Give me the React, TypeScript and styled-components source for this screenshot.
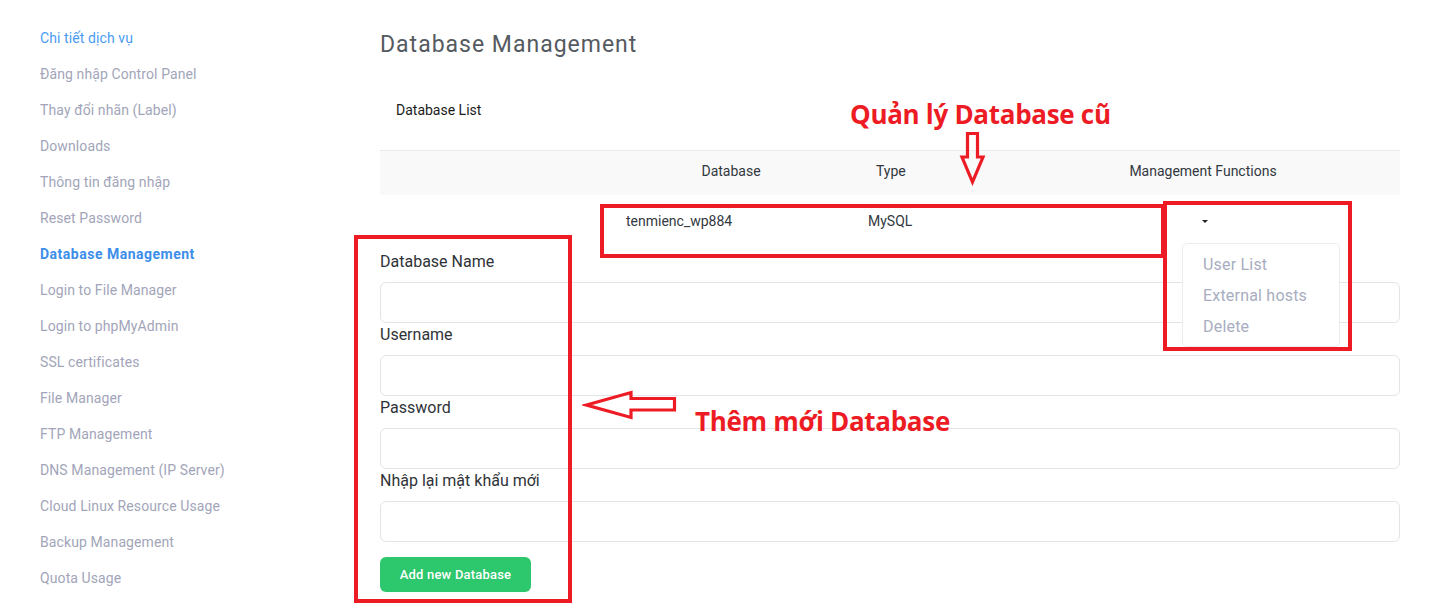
import React from 'react';
import styled, { createGlobalStyle } from 'styled-components';

const GlobalStyle = createGlobalStyle`
  html, body {
    margin: 0;
    padding: 0;
    background: #ffffff;
  }
  body {
    font-family: 'Roboto', 'Liberation Sans', sans-serif;
  }
`;

const menuItems = [
  { label: 'Chi tiết dịch vụ', kind: 'link' },
  { label: 'Đăng nhập Control Panel' },
  { label: 'Thay đổi nhãn (Label)' },
  { label: 'Downloads' },
  { label: 'Thông tin đăng nhập' },
  { label: 'Reset Password' },
  { label: 'Database Management', kind: 'active' },
  { label: 'Login to File Manager' },
  { label: 'Login to phpMyAdmin' },
  { label: 'SSL certificates' },
  { label: 'File Manager' },
  { label: 'FTP Management' },
  { label: 'DNS Management (IP Server)' },
  { label: 'Cloud Linux Resource Usage' },
  { label: 'Backup Management' },
  { label: 'Quota Usage' },
];

const fields = ['Database Name', 'Username', 'Password', 'Nhập lại mật khẩu mới'];

export default function App() {
  return (
    <>
      <GlobalStyle />
      <Page>
        <Sidebar>
          {menuItems.map((item) => (
            <MenuLink key={item.label} $kind={item.kind}>
              {item.label}
            </MenuLink>
          ))}
        </Sidebar>

        <Main>
          <Title>Database Management</Title>
          <CardHeader>Database List</CardHeader>

          <Table>
            <HeadRow>
              <Cell />
              <Cell $align="center">Database</Cell>
              <Cell $pad={14}>Type</Cell>
              <Cell $align="center">Management Functions</Cell>
            </HeadRow>
            <DataRow>
              <Cell />
              <Cell $pad={26}>tenmienc_wp884</Cell>
              <Cell $pad={6}>MySQL</Cell>
              <ActionCell>
                <Caret />
                <Dropdown>
                  <DropItem>User List</DropItem>
                  <DropItem>External hosts</DropItem>
                  <DropItem>Delete</DropItem>
                </Dropdown>
              </ActionCell>
            </DataRow>
          </Table>

          <Form>
            {fields.map((f) => (
              <Field key={f}>
                <Label>{f}</Label>
                <Input type={f.includes('Pass') || f.includes('khẩu') ? 'password' : 'text'} />
              </Field>
            ))}
            <SubmitButton>Add new Database</SubmitButton>
          </Form>
        </Main>

        {/* red callouts drawn over the page */}
        <Frame style={{ left: 600, top: 204, width: 565, height: 54 }} />
        <Frame style={{ left: 1163, top: 201, width: 189, height: 150 }} />
        <Frame style={{ left: 354, top: 235, width: 218, height: 368 }} />

        <Note style={{ left: 850, top: 96 }}>Quản lý Database cũ</Note>
        <Note style={{ left: 695, top: 403 }}>Thêm mới Database</Note>

        <ArrowSvg style={{ left: 958, top: 130 }} width="30" height="56" viewBox="0 0 30 56">
          <path
            d="M9.5 3.5 H19.5 V27 H25 L14.5 52 L4 27 H9.5 Z"
            fill="none"
            stroke="#ed1c24"
            strokeWidth="3.2"
            strokeLinejoin="miter"
          />
        </ArrowSvg>
        <ArrowSvg style={{ left: 582, top: 389 }} width="98" height="32" viewBox="0 0 98 32">
          <path
            d="M4.5 16 L49 3.5 V9.5 H92.5 V21 H49 V28.5 Z"
            fill="none"
            stroke="#ed1c24"
            strokeWidth="3.2"
            strokeLinejoin="miter"
          />
        </ArrowSvg>
      </Page>
    </>
  );
}

const Page = styled.div`
  position: relative;
  display: flex;
  width: 1436px;
  min-height: 608px;
  overflow: hidden;
`;

const Sidebar = styled.nav`
  width: 340px;
  padding: 27px 0 0 40px;
  display: flex;
  flex-direction: column;
`;

const MenuLink = styled.a<{ $kind?: string }>`
  height: 36px;
  font-size: 14px;
  line-height: 22px;
  cursor: pointer;
  color: ${(p) => (p.$kind === 'link' ? '#4a9cf2' : p.$kind === 'active' ? '#3d8ee8' : '#a2a5b9')};
  font-weight: ${(p) => (p.$kind === 'active' ? 700 : 400)};
  letter-spacing: ${(p) => (p.$kind === 'active' ? '0.5px' : '0.1px')};
`;

const Main = styled.main`
  width: 1020px;
  padding-top: 29px;
  display: flex;
  flex-direction: column;
`;

const Title = styled.h1`
  margin: 0;
  font-size: 23px;
  font-weight: 400;
  line-height: 32px;
  color: #555a60;
  letter-spacing: 1px;
`;

const CardHeader = styled.div`
  padding: 0 16px;
  margin-top: 29px;
  height: 60px;
  line-height: 40px;
  font-size: 14px;
  color: #1b1b1b;
`;

const Table = styled.div`
  display: flex;
  flex-direction: column;
`;

const Row = styled.div`
  display: grid;
  grid-template-columns: 220px 262px 144px 1fr;
  font-size: 14px;
  color: #333840;
`;

const HeadRow = styled(Row)`
  height: 45px;
  box-sizing: border-box;
  padding-top: 10px;
  line-height: 20px;
  background: #f9f9f9;
  border-top: 1px solid #ebebeb;
`;

const DataRow = styled(Row)`
  height: 54px;
  padding-top: 16px;
  box-sizing: border-box;
  line-height: 20px;
`;

const Cell = styled.div<{ $align?: string; $pad?: number }>`
  text-align: ${(p) => p.$align || 'left'};
  padding-left: ${(p) => p.$pad || 0}px;
`;

const ActionCell = styled.div`
  position: relative;
  display: flex;
  justify-content: center;
`;

const Caret = styled.span`
  margin-top: 9px;
  margin-left: 4px;
  width: 0;
  height: 0;
  border-left: 3px solid transparent;
  border-right: 3px solid transparent;
  border-top: 3px solid #222;
`;

const Dropdown = styled.div`
  position: absolute;
  left: 176px;
  top: 32px;
  width: 158px;
  height: 104px;
  padding: 5px 0 0 20px;
  box-sizing: border-box;
  background: #fff;
  border: 1px solid #ececf0;
  border-radius: 5px;
  z-index: 2;
`;

const DropItem = styled.div`
  font-size: 16px;
  line-height: 31px;
  letter-spacing: 0.2px;
  color: #a8adc0;
`;

const Form = styled.form`
  display: flex;
  flex-direction: column;
  margin-top: 1px;
`;

const Field = styled.div`
  display: flex;
  flex-direction: column;
`;

const Label = styled.label`
  font-size: 16px;
  line-height: 24px;
  margin-bottom: 8px;
  color: #2f3338;
`;

const Input = styled.input`
  height: 41px;
  box-sizing: border-box;
  border: 1px solid #e3e4e8;
  border-radius: 6px;
  background: #fff;
  outline: none;
`;

const SubmitButton = styled.button`
  align-self: flex-start;
  margin-top: 15px;
  width: 151px;
  height: 35px;
  border: none;
  border-radius: 6px;
  background: #2dc76d;
  color: #fff;
  font-family: 'Roboto', 'Liberation Sans', sans-serif;
  font-size: 13px;
  font-weight: 500;
  letter-spacing: 0.2px;
  cursor: pointer;
`;

const Frame = styled.div`
  position: absolute;
  box-sizing: border-box;
  border: 4px solid #ed1c24;
  z-index: 3;
  pointer-events: none;
`;

const Note = styled.div`
  position: absolute;
  font-family: 'Open Sans', 'Liberation Sans', sans-serif;
  font-weight: 700;
  font-size: 26px;
  line-height: 36px;
  color: #ed1c24;
  letter-spacing: -0.3px;
  z-index: 3;
`;

const ArrowSvg = styled.svg`
  position: absolute;
  z-index: 3;
`;
